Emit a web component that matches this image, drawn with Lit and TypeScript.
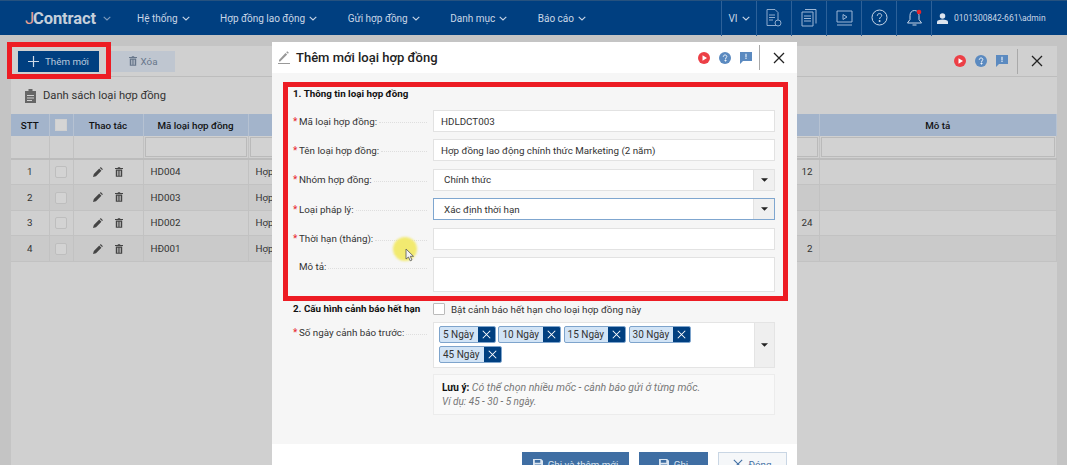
import { css, html, LitElement, svg } from 'lit';
import { customElement } from 'lit/decorators.js';

const chevron = html`<svg class="chev" viewBox="0 0 8 5" width="8" height="5"><path d="M.7.8 4 4 7.3.8" fill="none" stroke="currentColor" stroke-width="1.1"/></svg>`;
const caret = html`<svg viewBox="0 0 8 4" width="7" height="4"><path d="M0 0h8L4 4z" fill="#222"/></svg>`;
const trash = (c: string) => html`<svg viewBox="0 0 10 12" width="8" height="10"><path fill=${c} d="M3.500 0h3v1H10v1.400H0V1h3.500zM1 3h8v9H1zm1.600 1.300v6.400h.9V4.300zm2 0v6.400h.9V4.300zm2 0v6.400h.9V4.300z" fill-rule="evenodd"/></svg>`;
const pencil = html`<svg viewBox="0 0 12 12" width="10" height="10"><path fill="#444" d="M0 12l1-3.600 6.500-6.500 2.600 2.600L3.600 11zM8.300 1.100 9.300.1l2.600 2.600-1 1z"/></svg>`;
const cross = (c: string, s: number, w = 1.3) => html`<svg viewBox="0 0 12 12" width=${s} height=${s}><path d="M1 1l10 10M11 1 1 11" stroke=${c} stroke-width=${w} fill="none"/></svg>`;

const helpIcons = html`
  <svg viewBox="0 0 12 12" width="12" height="12"><circle cx="6" cy="6" r="6" fill="#ec3f46"/><path d="M4.500 3.300v5.400L9 6z" fill="#fff"/></svg>
  <svg viewBox="0 0 12 12" width="12" height="12"><circle cx="6" cy="6" r="6" fill="#5b8ac0"/><path d="M4.300 4.800C4.300 3.700 5 3 6.100 3s1.700.7 1.700 1.500c0 1.200-1.300 1.200-1.300 2.500M6 8h1v1H6z" fill="none" stroke="#fff" stroke-width=".9"/></svg>
  <svg viewBox="0 0 12 12" width="12" height="12"><path d="M0 0h12v9H3l-3 3z" fill="#5b8ac0"/><path d="M5.500 1.800h1v3.600h-1zm0 4.300h1v1h-1z" fill="#fff"/></svg>`;

const navItems = ['Hệ thống', 'Hợp đồng lao động', 'Gửi hợp đồng', 'Danh mục', 'Báo cáo'];

const topIcons = [
  svg`<path d="M1 .5h8l3 3v13H1zM3 6h6M3 8.500h6M3 11h4" fill="none" stroke="#9db7d6" stroke-width=".9"/><circle cx="12" cy="14" r="3" fill="#003f80" stroke="#9db7d6" stroke-width=".9"/>`,
  svg`<path d="M4 .5h11v14M1 3h11v14H1zM3 7h7M3 9.500h7M3 12h7" fill="none" stroke="#9db7d6" stroke-width="1"/>`,
  svg`<path d="M1 2h15v11H1zM1 16h15M7 5.500v5l4-2.500z" fill="none" stroke="#9db7d6" stroke-width="1"/>`,
  svg`<circle cx="8.500" cy="8.500" r="7.500" fill="none" stroke="#c8d6e8" stroke-width="1"/><path d="M6.300 6.800C6.300 5.400 7.200 4.600 8.500 4.600s2.200.8 2.200 1.900c0 1.600-2.100 1.600-2.100 3.500M8.100 11.500h1v1h-1z" fill="none" stroke="#c8d6e8" stroke-width="1"/>`,
  svg`<path d="M8.500 1.500c3 0 4.500 2.500 4.500 5v4l2.500 3.500h-14L4 10.500v-4c0-2.500 1.500-5 4.500-5zM6.500 16h4" fill="none" stroke="#c8d6e8" stroke-width="1"/><circle cx="13" cy="3" r="2.300" fill="#e8262d"/>`,
];

const rows = [
  { stt: 1, code: 'HD004', months: '12' },
  { stt: 2, code: 'HD003', months: '' },
  { stt: 3, code: 'HD002', months: '24' },
  { stt: 4, code: 'HĐ001', months: '2' },
];

const tags = ['5 Ngày', '10 Ngày', '15 Ngày', '30 Ngày', '45 Ngày'];

@customElement('app-root')
export class AppRoot extends LitElement {
  static styles = css`
    :host {
      display: block;
      position: relative;
      width: 1067px;
      height: 465px;
      overflow: hidden;
      background: #c4c4c4;
      font-family: Roboto, "Liberation Sans", sans-serif;
      font-size: 9.800px;
      color: #222;
    }
    .topbar {
      display: flex;
      align-items: center;
      height: 35px;
      box-sizing: border-box;
      background: #003f80;
      border-top: 1px solid #26527f;
      color: #c9d6e6;
    }
    .logo {
      width: 72px;
      margin-left: 25px;
      font-size: 16.500px;
      font-weight: 700;
      color: #c5cfdb;
      letter-spacing: -.1px;
    }
    .logo i { color: #e8a08f; font-style: normal; font-weight: 400; margin-right: -1px; }
    .chev { margin-left: 4px; vertical-align: middle; }
    .logo-chev { color: #7f9cbd; margin: 0 0 0 6px; }
    .logo-chev .chev { margin-left: 0; }
    .nav { display: flex; margin-left: 26px; gap: 30.500px; font-size: 10px; flex: 1; }
    .vi, .tool {
      display: flex;
      align-items: center;
      justify-content: center;
      width: 35px;
      height: 35px;
      box-sizing: border-box;
      border-left: 1px solid #2d6199;
      font-size: 10px;
    }
    .user {
      display: flex;
      align-items: center;
      gap: 6px;
      width: 136px;
      height: 35px;
      padding-left: 5px;
      box-sizing: border-box;
      border-left: 1px solid #2d6199;
      font-size: 8.500px;
    }

    .panel {
      margin: 11px 10px 0 11px;
      height: 419px;
      background: #d0d0d0;
    }
    .toolbar {
      display: flex;
      align-items: center;
      height: 31px;
      box-sizing: border-box;
      padding-left: 7px;
      gap: 12px;
      border-bottom: 1px solid #bdbdbd;
    }
    .btn-add, .btn-del {
      display: flex;
      align-items: center;
      justify-content: center;
      height: 21px;
      gap: 6px;
    }
    .btn-add { width: 81px; background: #003f80; color: #b9c9dc; }
    .btn-del { width: 64px; background: #bfc6d0; color: #67768a; gap: 4px; }
    .panel-icons { display: flex; align-items: center; margin-left: auto; gap: 9px; padding-right: 14px; }
    .divider { width: 1px; height: 25px; background: #a9a9a9; margin-right: 4px; }
    .panel-title {
      display: flex;
      align-items: center;
      gap: 7px;
      height: 37px;
      padding-left: 14px;
      box-sizing: border-box;
      font-size: 11.200px;
      color: #333;
    }

    table { border-collapse: collapse; table-layout: fixed; width: 1046px; }
    th {
      height: 22px;
      padding: 0;
      background: #a3b4cb;
      border-right: 1px solid #b6c2d2;
      font-weight: 500;
      color: #111;
    }
    td {
      padding: 0;
      height: 24.600px;
      border-right: 1px solid #c2c2c2;
      border-bottom: 1px solid #c2c2c2;
      color: #333;
      text-align: center;
    }
    .filter td { height: 21.500px; border-bottom: 2px solid #bcbcbc; }
    .filter div { height: 18px; margin: 0 1px; border: 1px solid #bababa; background: #d2d2d2; }
    tbody tr:nth-child(odd):not(.filter) td { background: #cacaca; }
    td.left { text-align: left; padding-left: 7px; }
    td.right { text-align: right; padding-right: 6px; }
    .box {
      display: inline-block;
      width: 10px;
      height: 10px;
      border: 1px solid #bebebe;
      border-radius: 2px;
      background: #d3d3d3;
      vertical-align: middle;
    }
    th .box { border-color: #d0d0d0; background: #d5d5d5; border-radius: 0; }
    .acts { display: flex; justify-content: center; align-items: center; gap: 12px; }

    .modal {
      position: absolute;
      left: 272px;
      top: 42px;
      width: 525px;
      height: 423px;
      background: #fff;
      display: flex;
      flex-direction: column;
    }
    .modal-head {
      display: flex;
      align-items: center;
      flex: 0 0 31px;
      padding-left: 6px;
      gap: 6px;
      box-sizing: border-box;
      font-size: 13px;
      font-weight: 500;
      color: #222;
    }
    .modal-head .panel-icons { padding-right: 12px; }
    .modal-head .divider { margin-left: -2px; }
    .modal-body {
      flex: 1;
      min-height: 0;
      background: #f6f6f6;
      padding: 15px 22px 0 21px;
      box-sizing: border-box;
    }
    h4 { margin: 0; font-size: 9.800px; font-weight: 700; color: #111; line-height: 12px; }
    .row { display: flex; margin-top: 7.400px; }
    .first { margin-top: 10px; }
    .label {
      flex: 0 0 140px;
      display: flex;
      align-items: center;
      height: 22px;
      box-sizing: border-box;
      padding-right: 6px;
      color: #333;
    }
    .top { align-items: flex-start; padding-top: 4px; }
    .multi-label { padding-top: 5px; }
    .label b { width: 6px; color: #e8262d; font-weight: 400; font-size: 10px; }
    .label span { flex: 0 0 auto; }
    .label u {
      flex: 1;
      text-decoration: none;
      border-bottom: 1px dotted #dedede;
      margin: 3px 0 0 2px;
      align-self: center;
    }
    .top u { margin-top: 7px; align-self: flex-start; }
    .field {
      flex: 1;
      display: flex;
      align-items: center;
      height: 22px;
      box-sizing: border-box;
      padding-left: 7px;
      background: #fff;
      border: 1px solid #e2e2e2;
      color: #333;
    }
    .select { padding-left: 10px; }
    .focus { border-color: #7fa6cf; }
    .select .arrow {
      margin-left: auto;
      width: 20px;
      height: 100%;
      display: flex;
      align-items: center;
      justify-content: center;
      background: #f0f0f0;
      border-left: 1px solid #e2e2e2;
    }
    .area { height: 35px; }
    .section2 { margin-top: 11px; display: flex; align-items: center; height: 13px; }
    .section2 h4 { flex: 0 0 140px; }
    .check { width: 12px; height: 12px; box-sizing: border-box; border: 1px solid #bbb; background: #fff; border-radius: 1px; margin-right: 6px; }
    .section2 span { color: #333; }
    .multi-row { margin-top: 6px; }
    .multi {
      flex: 1;
      display: flex;
      height: 46px;
      box-sizing: border-box;
      background: #fff;
      border: 1px solid #e4e4e4;
    }
    .tags { flex: 1; display: flex; flex-wrap: wrap; align-content: flex-start; gap: 3px 2.500px; padding: 3px 60px 0 5px; }
    .tag { display: flex; height: 17px; background: #d2e4f6; border: 1px solid #7ea4cc; box-sizing: border-box; border-radius: 2px; overflow: hidden; color: #333; font-size: 10px; }
    .tag span { padding: 0 4px 0 3px; line-height: 15px; }
    .tag i { width: 17px; background: #003f80; display: flex; align-items: center; justify-content: center; }
    .multi .arrow { flex: 0 0 19px; display: flex; align-items: center; justify-content: center; background: #efefef; border-left: 1px solid #e4e4e4; }
    .note {
      margin: 6px 0 0 140px;
      height: 41px;
      box-sizing: border-box;
      padding: 6px 8px;
      background: #f9f9f9;
      border: 1px solid #ececec;
      font-size: 10px;
      line-height: 14px;
      color: #777;
      font-style: italic;
    }
    .note b { font-style: normal; font-weight: 700; color: #111; }
    .note span { font-size: 10.500px; }
    .modal-foot {
      flex: 0 0 21px;
      min-height: 0;
      box-sizing: border-box;
      display: flex;
      justify-content: flex-end;
      align-items: flex-start;
      gap: 10px;
      padding: 8px 10px 0 0;
    }
    .foot-btn {
      display: flex;
      align-items: center;
      justify-content: center;
      flex: none;
      gap: 5px;
      height: 24px;
      box-sizing: border-box;
      background: #3f6ea3;
      color: #dbe5f0;
    }
    .foot-btn.close { background: #f5f7f9; color: #3f6ea3; border: 1px solid #c9d6e4; }

    .mark { position: absolute; border: 5px solid #ed1c24; box-sizing: border-box; pointer-events: none; }
    .mark.a { left: 7px; top: 42px; width: 104px; height: 37px; }
    .mark.b { left: 283px; top: 82px; width: 505px; height: 219px; }
    .spot {
      position: absolute;
      left: 393px;
      top: 237px;
      width: 24px;
      height: 24px;
      border-radius: 50%;
      background: #f2ea70;
      filter: blur(1px);
    }
    .cursor { position: absolute; left: 405px; top: 248px; }
  `;

  private label(text: string, required = true, cls = '') {
    return html`<div class="label ${cls}"><b>${required ? '*' : ''}</b><span>${text}</span><u></u></div>`;
  }

  private renderTop() {
    return html`
      <div class="topbar">
        <div class="logo"><i>J</i>Contract</div>
        <span class="logo-chev">${chevron}</span>
        <div class="nav">${navItems.map((n) => html`<span>${n}${chevron}</span>`)}</div>
        <div class="vi">VI${chevron}</div>
        ${topIcons.map((i) => html`<div class="tool"><svg viewBox="0 0 17 18" width="17" height="18">${i}</svg></div>`)}
        <div class="user">
          <svg viewBox="0 0 12 12" width="11" height="11"><circle cx="6" cy="3.200" r="3" fill="#dde5ef"/><path d="M0 12V9.500C0 8 2.500 7 6 7s6 1 6 2.500V12z" fill="#dde5ef"/></svg>
          0101300842-661\\admin
        </div>
      </div>`;
  }

  private renderPanel() {
    return html`
      <div class="panel">
        <div class="toolbar">
          <div class="btn-add"><svg viewBox="0 0 11 11" width="11" height="11"><path d="M5.500 0v11M0 5.500h11" stroke="#cfdbe8" stroke-width="1.200"/></svg>Thêm mới</div>
          <div class="btn-del">${trash('#67768a')}Xóa</div>
          <div class="panel-icons">${helpIcons}<div class="divider"></div>${cross('#222', 12)}</div>
        </div>
        <div class="panel-title">
          <svg viewBox="0 0 11 14" width="11" height="14"><path fill="#666" fill-rule="evenodd" d="M0 2h3.500V0h4v2H11v12H0zm2 4v1h7V6zm0 2.500v1h7v-1zm0 2.500v1h5v-1z"/></svg>
          Danh sách loại hợp đồng
        </div>
        <table>
          <colgroup>
            <col style="width:38px" /><col style="width:24px" /><col style="width:70px" /><col style="width:105px" />
            <col style="width:471px" /><col style="width:100px" /><col />
          </colgroup>
          <thead>
            <tr>
              <th>STT</th><th><span class="box"></span></th><th>Thao tác</th><th>Mã loại hợp đồng</th>
              <th></th><th></th><th>Mô tả</th>
            </tr>
          </thead>
          <tbody>
            <tr class="filter">
              <td></td><td></td><td></td><td><div></div></td><td><div></div></td><td><div></div></td><td><div></div></td>
            </tr>
            ${rows.map((r) => html`
              <tr>
                <td>${r.stt}</td>
                <td><span class="box"></span></td>
                <td><div class="acts">${pencil}${trash('#444')}</div></td>
                <td class="left">${r.code}</td>
                <td class="left">Hợp</td>
                <td class="right">${r.months}</td>
                <td></td>
              </tr>`)}
          </tbody>
        </table>
      </div>`;
  }

  private renderModal() {
    return html`
      <div class="modal">
        <div class="modal-head">
          <svg viewBox="0 0 12 13" width="12" height="13"><path fill="#999" d="M1 9l6.500-7 1.700 1.600-7 7H1zM8.200 1.200 9.200.2l1.700 1.600-1 1zM0 12h12v1H0z"/></svg>
          Thêm mới loại hợp đồng
          <div class="panel-icons">${helpIcons}<div class="divider"></div>${cross('#222', 12)}</div>
        </div>
        <div class="modal-body">
          <h4>1. Thông tin loại hợp đồng</h4>
          <div class="row first">${this.label('Mã loại hợp đồng:')}<div class="field">HDLDCT003</div></div>
          <div class="row">${this.label('Tên loại hợp đồng:')}<div class="field">Hợp đồng lao động chính thức Marketing (2 năm)</div></div>
          <div class="row">${this.label('Nhóm hợp đồng:')}<div class="field select">Chính thức<span class="arrow">${caret}</span></div></div>
          <div class="row">${this.label('Loại pháp lý:')}<div class="field select focus">Xác định thời hạn<span class="arrow">${caret}</span></div></div>
          <div class="row">${this.label('Thời hạn (tháng):')}<div class="field"></div></div>
          <div class="row">${this.label('Mô tả:', false, 'top')}<div class="field area"></div></div>
          <div class="section2">
            <h4>2. Cấu hình cảnh báo hết hạn</h4>
            <div class="check"></div>
            <span>Bật cảnh báo hết hạn cho loại hợp đồng này</span>
          </div>
          <div class="row multi-row">
            ${this.label('Số ngày cảnh báo trước:', true, 'top multi-label')}
            <div class="multi">
              <div class="tags">${tags.map((t) => html`<div class="tag"><span>${t}</span><i>${cross('#fff', 9, 1.400)}</i></div>`)}</div>
              <div class="arrow">${caret}</div>
            </div>
          </div>
          <div class="note"><b>Lưu ý:</b> <span>Có thể chọn nhiều mốc - cảnh báo gửi ở từng mốc.</span><br />Ví dụ: 45 - 30 - 5 ngày.</div>
        </div>
        <div class="modal-foot">
          <div class="foot-btn" style="width:107px"><svg viewBox="0 0 11 11" width="10" height="10"><path fill="#dbe5f0" fill-rule="evenodd" d="M0 0h9l2 2v9H0zm2 1v3h6V1zm0 5v4h7V6z"/></svg>Ghi và thêm mới</div>
          <div class="foot-btn" style="width:69px"><svg viewBox="0 0 11 11" width="10" height="10"><path fill="#dbe5f0" fill-rule="evenodd" d="M0 0h9l2 2v9H0zm2 1v3h6V1zm0 5v4h7V6z"/></svg>Ghi</div>
          <div class="foot-btn close" style="width:69px">${cross('#3f6ea3', 10)}Đóng</div>
        </div>
      </div>`;
  }

  render() {
    return html`
      ${this.renderTop()}
      ${this.renderPanel()}
      ${this.renderModal()}
      <div class="mark a"></div>
      <div class="mark b"></div>
      <div class="spot"></div>
      <svg class="cursor" viewBox="0 0 10 14" width="10" height="14"><path d="M1 1v10l2.500-2 1.700 3.800 1.800-.8-1.700-3.700H8.500z" fill="#f4f4f4" stroke="#555" stroke-width=".8"/></svg>
    `;
  }
}
